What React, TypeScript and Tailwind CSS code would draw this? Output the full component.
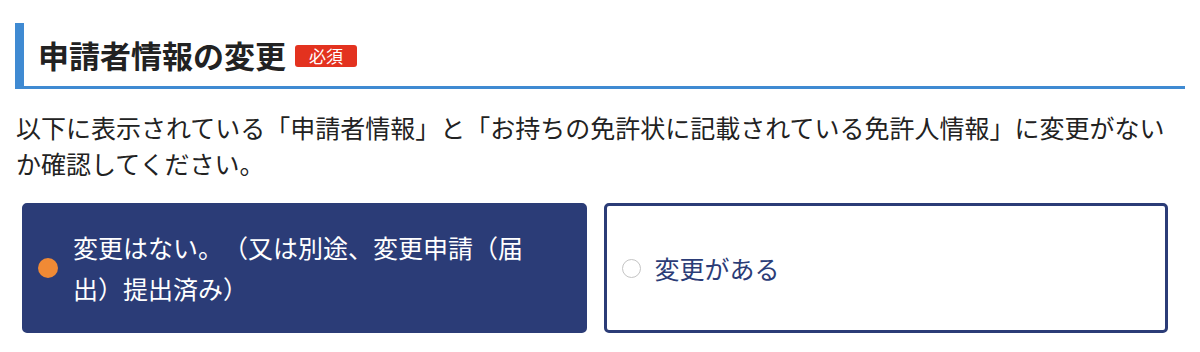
import { useState } from "react";

const font = { fontFamily: '"Noto Sans CJK JP", "Noto Sans", sans-serif' };

type Choice = "none" | "changed";

export default function App() {
  const [choice, setChoice] = useState<Choice>("none");

  return (
    <div
      className="bg-white w-[1200px] h-[352px] px-[15px] pt-[23px] text-[#222] [text-spacing-trim:space-all]"
      style={font}
    >
      {/* Section heading */}
      <div className="flex items-center h-[66px] border-l-[9px] border-b-[3px] border-[#3f8ad2] pl-[14px]">
        <h2 className="text-[31px] font-bold leading-none">申請者情報の変更</h2>
        <span className="ml-[9px] mt-[2px] inline-flex items-center justify-center w-[62px] h-[22px] rounded-[3px] bg-[#e3321f] text-white text-[17px] leading-none">
          必須
        </span>
      </div>

      {/* Description */}
      <p className="mt-[20px] w-[1160px] text-[25px] leading-[36px] pl-[1px]">
        以下に表示されている「申請者情報」と「お持ちの免許状に記載されている免許人情報」に変更がないか確認してください。
      </p>

      {/* Options */}
      <div className="mt-[22px] ml-[7px] w-[1146px] grid grid-cols-2 gap-[17px]">
        <button
          type="button"
          onClick={() => setChoice("none")}
          className={
            choice === "none"
              ? "h-[130px] rounded-[5px] bg-[#2b3c77] border-[3px] border-[#2b3c77] flex items-center text-left pl-[13px] pr-[40px]"
              : "h-[130px] rounded-[5px] bg-white border-[3px] border-[#2b3c77] flex items-center text-left pl-[13px] pr-[40px]"
          }
        >
          {choice === "none" ? (
            <span className="shrink-0 w-[20px] h-[20px] rounded-full bg-[#f08a35]" />
          ) : (
            <span className="shrink-0 w-[19px] h-[19px] rounded-full border border-[#c4c4c4] bg-white" />
          )}
          <span
            className={
              choice === "none"
                ? "ml-[15px] text-white text-[25px] leading-[41px]"
                : "ml-[15px] text-[#2b3c77] text-[25px] leading-[41px]"
            }
          >
            変更はない。（又は別途、変更申請（届出）提出済み）
          </span>
        </button>

        <button
          type="button"
          onClick={() => setChoice("changed")}
          className={
            choice === "changed"
              ? "h-[130px] rounded-[5px] bg-[#2b3c77] border-[3px] border-[#2b3c77] flex items-center text-left pl-[15px] pr-[40px]"
              : "h-[130px] rounded-[5px] bg-white border-[3px] border-[#2b3c77] flex items-center text-left pl-[15px] pr-[40px]"
          }
        >
          {choice === "changed" ? (
            <span className="shrink-0 w-[20px] h-[20px] rounded-full bg-[#f08a35]" />
          ) : (
            <span className="shrink-0 w-[19px] h-[19px] rounded-full border border-[#c4c4c4] bg-white" />
          )}
          <span
            className={
              choice === "changed"
                ? "ml-[14px] text-white text-[25px] leading-[41px]"
                : "ml-[14px] text-[#2b3c77] text-[25px] leading-[41px]"
            }
          >
            変更がある
          </span>
        </button>
      </div>
    </div>
  );
}
